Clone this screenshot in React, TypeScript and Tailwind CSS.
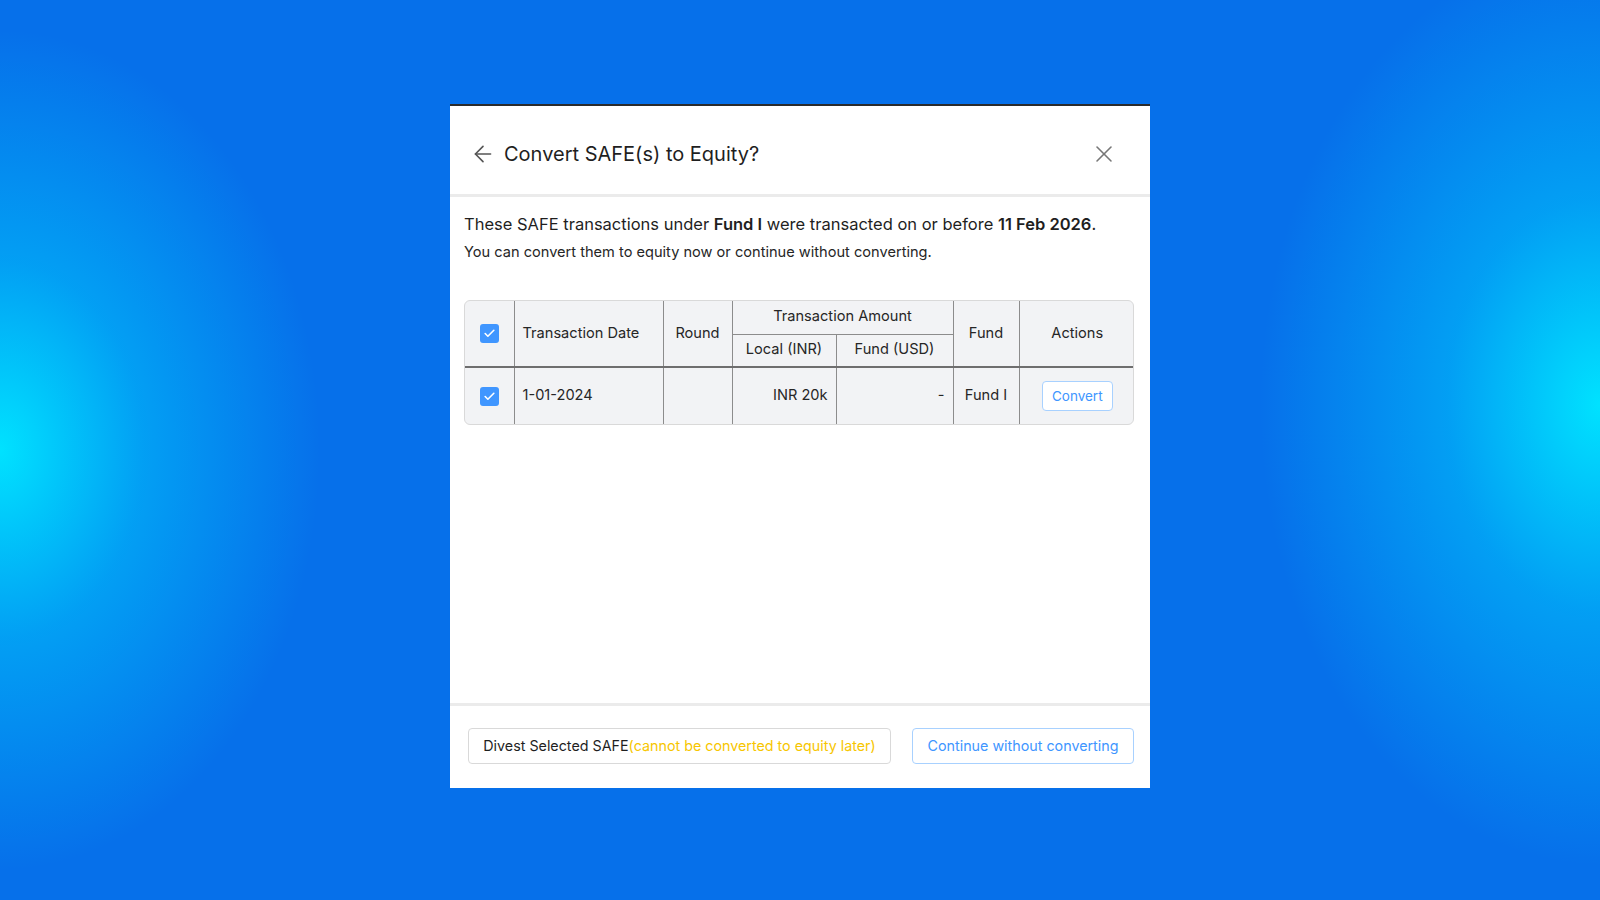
import { ArrowLeft, X, Check } from "lucide-react";

function Box() {
    return (
        <span className="inline-flex items-center justify-center w-[19px] h-[19px] rounded-[3px] bg-[#4096ff] align-middle">
            <Check className="w-[13px] h-[13px] text-white" strokeWidth={3} />
        </span>
    );
}

export default function App() {
    const cell = "border border-[#8c8c8c] px-2";
    const hb = "border-b-2 border-b-[#6e6e6e]";
    return (
        <div
            className="w-full h-[900px] flex justify-center pt-[104px] bg-[#0670ea] bg-[radial-gradient(ellipse_320px_420px_at_0%_50%,#00e2ff_0%,rgba(0,190,250,0.6)_45%,transparent_100%),radial-gradient(ellipse_340px_460px_at_100%_45%,#00e2ff_0%,rgba(0,190,250,0.6)_45%,transparent_100%)]"
            style={{ fontFamily: "Inter, 'Noto Sans', sans-serif" }}
        >
            <div className="w-[700px] h-[684px] bg-white border-t-2 border-[#2b2b2b] flex flex-col">
                {/* header */}
                <div className="h-[91px] flex items-center pt-[8px] pl-[20px] pr-[32px] border-b-[3px] border-[#ebebeb] shrink-0">
                    <ArrowLeft className="w-[26px] h-[26px] text-[#555]" strokeWidth={1.5} />
                    <span className="ml-[8px] text-[20px] text-[#1f1f1f]">Convert SAFE(s) to Equity?</span>
                    <X className="ml-auto w-[28px] h-[28px] text-[#777]" strokeWidth={1.3} />
                </div>

                {/* body */}
                <div className="flex-1 px-[14px] pt-[15px]">
                    <p className="text-[16.5px] leading-[24px] text-[#1f1f1f]">
                        These SAFE transactions under <b className="font-semibold">Fund I</b> were transacted on or before{" "}
                        <b className="font-semibold">11 Feb 2026</b>.
                    </p>
                    <p className="mt-[6px] text-[14.6px] leading-[20px] text-[#262626]">
                        You can convert them to equity now or continue without converting.
                    </p>

                    <div className="mt-[38px] w-[670px] rounded-[6px] border border-[#d9d9d9] overflow-hidden bg-[#f2f3f5]">
                        <table className="w-full border-collapse border-hidden text-[14.6px] text-[#262626] table-fixed">
                            <colgroup>
                                <col className="w-[49px]" />
                                <col className="w-[149px]" />
                                <col className="w-[69px]" />
                                <col className="w-[104px]" />
                                <col className="w-[117px]" />
                                <col className="w-[66px]" />
                                <col className="w-[116px]" />
                            </colgroup>
                            <thead>
                                <tr className="h-[33px]">
                                    <th rowSpan={2} className={`${cell} ${hb} text-center font-normal`}>
                                        <Box />
                                    </th>
                                    <th rowSpan={2} className={`${cell} ${hb} text-left font-normal`}>Transaction Date</th>
                                    <th rowSpan={2} className={`${cell} ${hb} text-center font-normal`}>Round</th>
                                    <th colSpan={2} className={`${cell} text-center font-normal`}>Transaction Amount</th>
                                    <th rowSpan={2} className={`${cell} ${hb} text-center font-normal`}>Fund</th>
                                    <th rowSpan={2} className={`${cell} ${hb} text-center font-normal`}>Actions</th>
                                </tr>
                                <tr className="h-[33px]">
                                    <th className={`${cell} ${hb} text-center font-normal`}>Local (INR)</th>
                                    <th className={`${cell} ${hb} text-center font-normal`}>Fund (USD)</th>
                                </tr>
                            </thead>
                            <tbody>
                                <tr className="h-[57px]">
                                    <td className={`${cell} text-center`}>
                                        <Box />
                                    </td>
                                    <td className={cell}>1-01-2024</td>
                                    <td className={cell}></td>
                                    <td className={`${cell} text-right`}>INR 20k</td>
                                    <td className={`${cell} text-right`}>-</td>
                                    <td className={`${cell} text-center`}>Fund I</td>
                                    <td className={`${cell} text-center`}>
                                        <button className="h-[30px] px-[9px] rounded-[4px] border border-[#a8d1ff] bg-white text-[13.5px] text-[#4096ff]">
                                            Convert
                                        </button>
                                    </td>
                                </tr>
                            </tbody>
                        </table>
                    </div>
                </div>

                {/* footer */}
                <div className="h-[85px] shrink-0 border-t-[3px] border-[#ebebeb] flex items-start pt-[22px] pl-[18px] pr-[15px] gap-[21px]">
                    <button className="h-[36px] w-[423px] rounded-[4px] border border-[#d9d9d9] bg-white text-[14.3px] text-[#1f1f1f] text-center">
                        Divest Selected SAFE<span className="text-[#f7c600]">(cannot be converted to equity later)</span>
                    </button>
                    <button className="h-[36px] w-[222px] rounded-[4px] border border-[#a8d1ff] bg-white text-[14.3px] text-[#4096ff]">
                        Continue without converting
                    </button>
                </div>
            </div>
        </div>
    );
}
